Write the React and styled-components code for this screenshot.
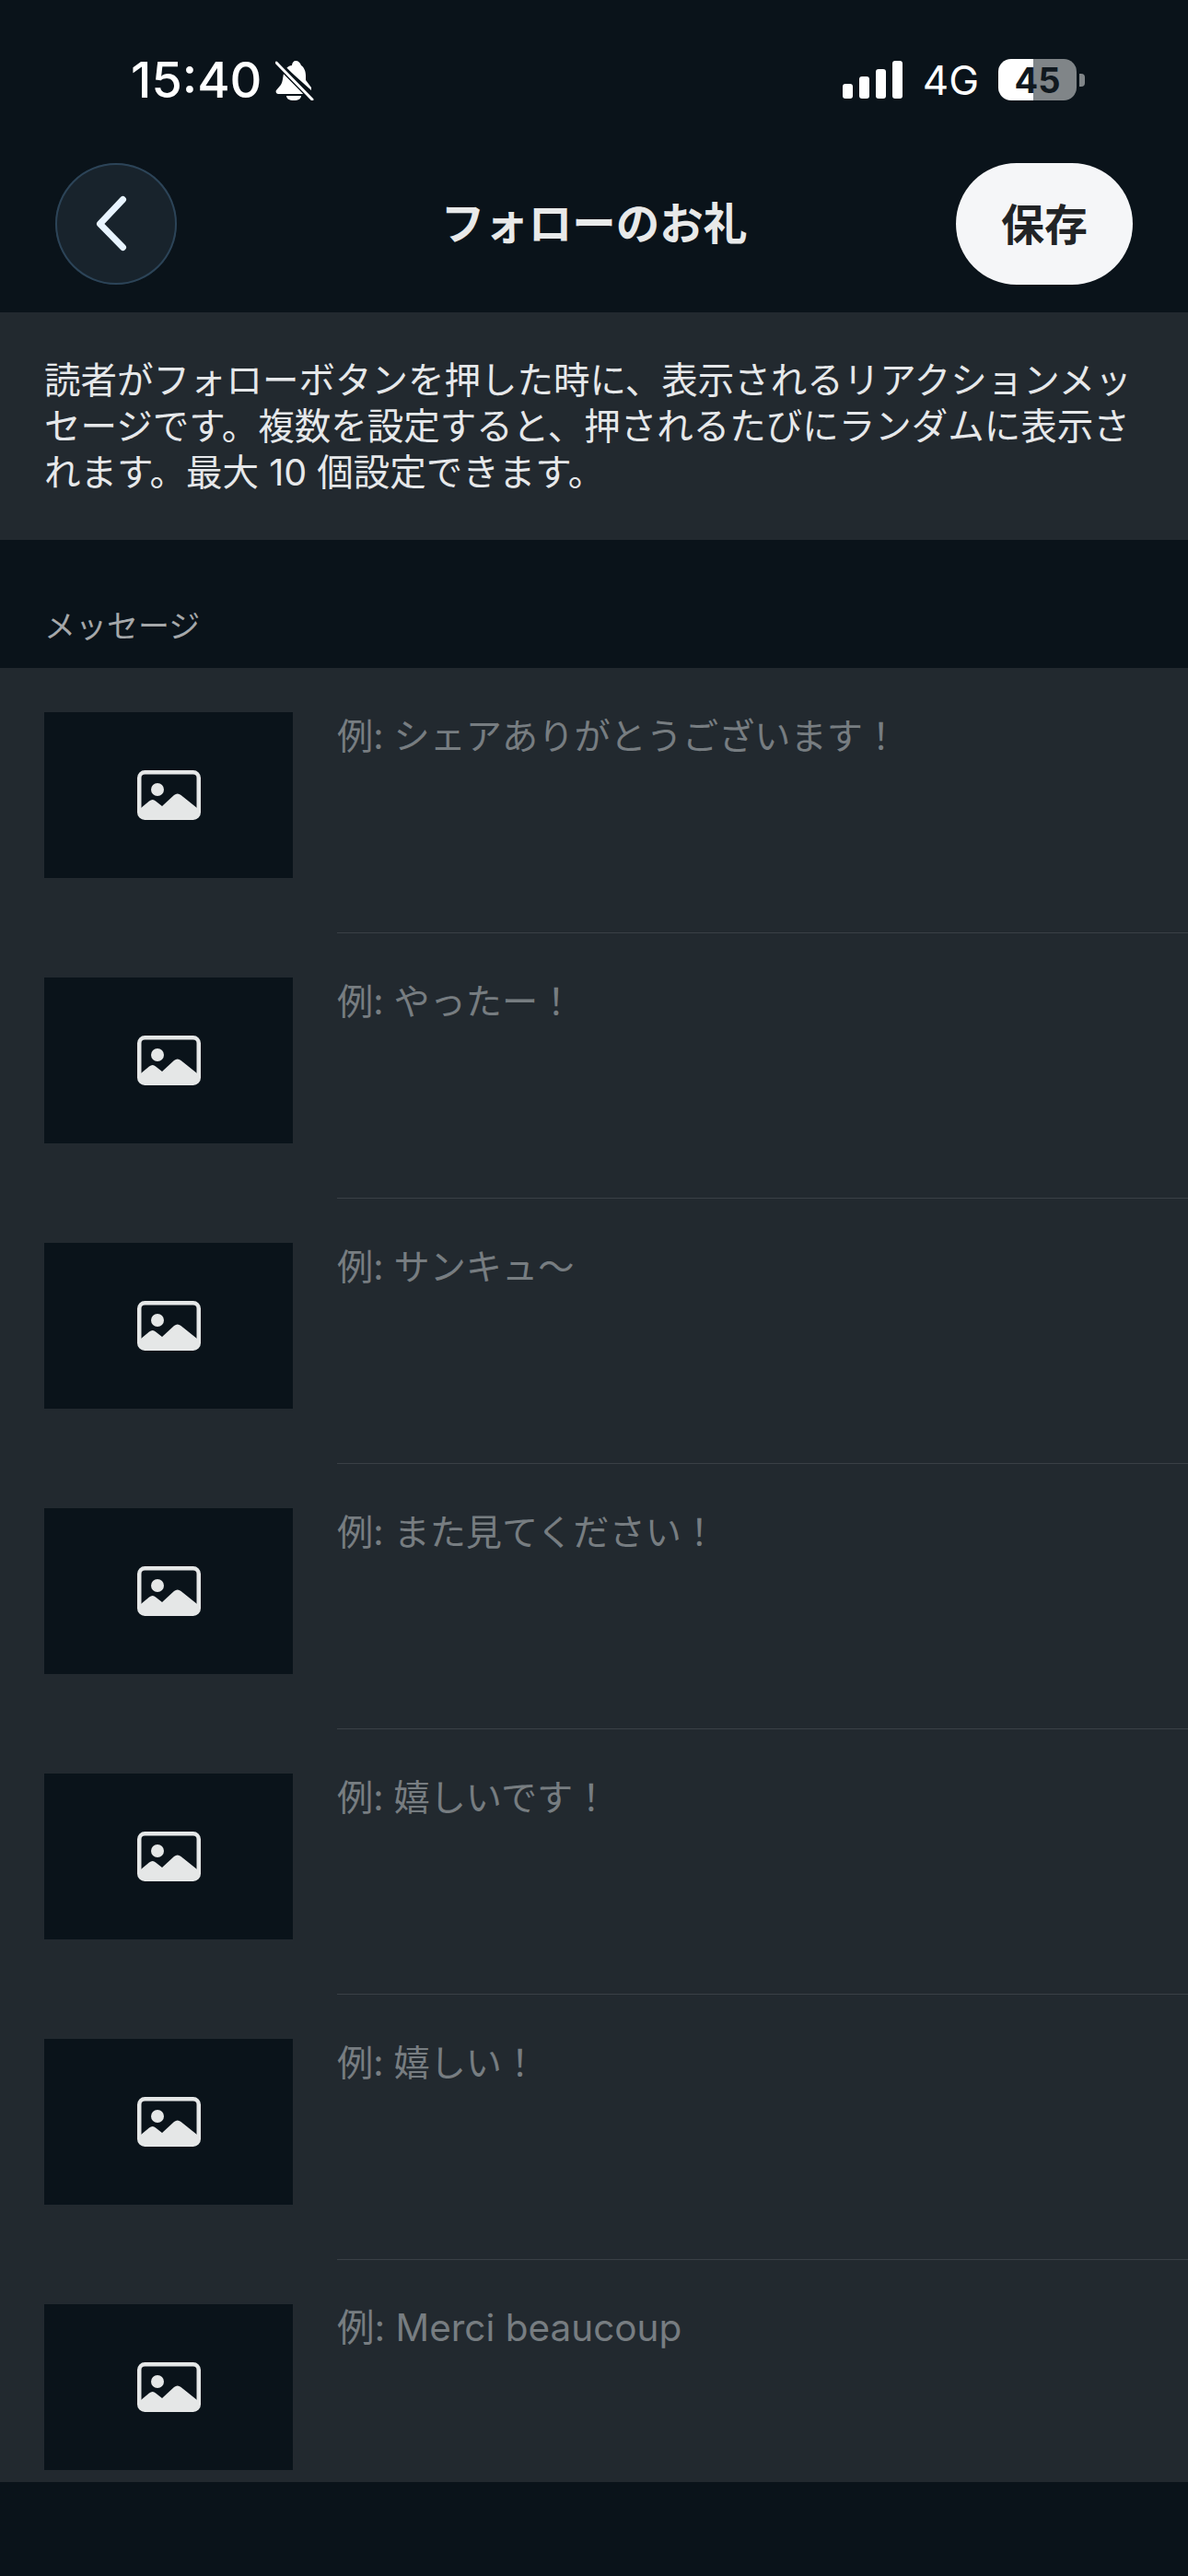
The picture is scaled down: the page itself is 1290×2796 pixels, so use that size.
import React from 'react';
import styled, { createGlobalStyle } from 'styled-components';

const GlobalStyle = createGlobalStyle`
  html, body {
    margin: 0;
    padding: 0;
    background: #0a131a;
  }
  body {
    font-family: Inter, "Noto Sans CJK JP", sans-serif;
  }
`;

const Page = styled.div`
  width: 1290px;
  height: 2796px;
  overflow: hidden;
  background: #0a131a;
`;

const StatusBar = styled.div`
  height: 177px;
  box-sizing: border-box;
  padding: 0 112px 4px 142px;
  display: flex;
  align-items: center;
  justify-content: space-between;
  color: #fff;
`;

const TimeGroup = styled.div`
  display: flex;
  align-items: center;
  gap: 15px;
`;

const Time = styled.span`
  font-size: 54px;
  font-weight: 500;
  line-height: 1;
`;

const StatusRight = styled.div`
  display: flex;
  align-items: center;
`;

const Signal = styled.div`
  display: flex;
  align-items: flex-end;
  gap: 7px;
  height: 41px;
  margin-right: 22px;
`;

const SignalBar = styled.div`
  width: 11px;
  height: ${(p) => p.$height}px;
  border-radius: 3px;
  background: #fff;
`;

const Network = styled.span`
  font-size: 44px;
  font-weight: 400;
  line-height: 1;
  margin-right: 21px;
`;

const Battery = styled.div`
  width: 85px;
  height: 45px;
  border-radius: 14px;
  display: flex;
  align-items: center;
  justify-content: center;
  color: #10181e;
  font-size: 38px;
  font-weight: 700;
  background: linear-gradient(
    to right,
    #fff ${(p) => p.$level}%,
    #808588 ${(p) => p.$level}%
  );
`;

const BatteryNub = styled.div`
  width: 6px;
  height: 14px;
  margin-left: 3px;
  border-radius: 0 4px 4px 0;
  background: #808588;
`;

const NavBar = styled.div`
  display: grid;
  grid-template-columns: 1fr auto 1fr;
  align-items: center;
  padding: 0 60px 30px;
`;

const BackButton = styled.div`
  justify-self: start;
  width: 132px;
  height: 132px;
  border-radius: 50%;
  background: #18232c;
  box-shadow: inset 0 0 0 2px #2c4458;
`;

const Title = styled.div`
  font-size: 47.5px;
  font-weight: 700;
  line-height: 60px;
  color: #e8e9e9;
`;

const SaveButton = styled.div`
  justify-self: end;
  width: 192px;
  height: 132px;
  box-sizing: border-box;
  padding-bottom: 5px;
  border-radius: 66px;
  background: #f5f6f8;
  color: #222426;
  font-size: 47px;
  font-weight: 700;
  display: flex;
  align-items: center;
  justify-content: center;
`;

const Info = styled.div`
  height: 247px;
  box-sizing: border-box;
  padding: 49px 48px 0;
  background: #22292f;
  color: #e6e8ea;
  font-size: 39.5px;
  font-weight: 400;
  line-height: 50px;
`;

const SectionLabel = styled.div`
  height: 139px;
  box-sizing: border-box;
  padding: 72px 48px 0;
  color: #a5a8aa;
  font-size: 34px;
  line-height: 44px;
`;

const List = styled.div`
  background: #22292f;
`;

const Row = styled.div`
  display: flex;
  gap: 48px;
  padding-left: 48px;
`;

const Thumb = styled.div`
  flex: none;
  width: 270px;
  height: 180px;
  margin: 48px 0 ${(p) => (p.$last ? 13 : 60)}px;
  background: #0a131a;
  display: flex;
  align-items: center;
  justify-content: center;
`;

const TextCell = styled.div`
  flex: 1;
  padding-top: 49px;
  border-bottom: ${(p) => (p.$last ? 'none' : '1px solid #3a4046')};
`;

const Placeholder = styled.div`
  color: #777d81;
  font-size: ${(p) => (p.$latin ? 40.5 : 39.2)}px;
  line-height: 50px;
`;

const BellOffIcon = () => (
  <svg width="42" height="44" viewBox="0 0 42 44" aria-hidden="true">
    <path
      d="M22 1c3 0 5 2 6 5 3 2 5 6 5 11v5l6 8v3L12 9c2-2 4-3 6-3 0-3 2-5 4-5Z"
      fill="#fff"
    />
    <path d="M9 15 31 37H3c-2 0-3-3-2-4l5-6c2-3 2-8 3-12Z" fill="#fff" />
    <path d="M12 39h16c0 3-3 5-8 5s-8-2-8-5Z" fill="#fff" />
    <path d="M2 3 41 43" stroke="#0a131a" strokeWidth="7" />
    <path d="M1 3 40 43" stroke="#fff" strokeWidth="3" strokeLinecap="round" />
  </svg>
);

const ChevronIcon = () => (
  <svg width="132" height="132" viewBox="0 0 132 132" aria-hidden="true">
    <path
      d="M73.5 39.5 48.5 66l25 25.5"
      fill="none"
      stroke="#e8f4ff"
      strokeWidth="7"
      strokeLinecap="round"
      strokeLinejoin="round"
    />
  </svg>
);

const ImageIcon = () => (
  <svg width="69" height="54" viewBox="0 0 69 54" aria-hidden="true">
    <rect x="2.25" y="2.25" width="64.5" height="49.5" rx="6" fill="none" stroke="#e5e7e7" strokeWidth="4.5" />
    <circle cx="22" cy="21" r="7" fill="#e5e7e7" />
    <path
      d="M4 41 13 33.5c2.5-2 5-2 7 0L27 39 40 27c2.5-2 5-2 7.5 0L65 41v7c0 2-2 4-4 4H8c-2 0-4-2-4-4Z"
      fill="#e5e7e7"
    />
  </svg>
);

const examples = [
  { text: '例: シェアありがとうございます！' },
  { text: '例: やったー！' },
  { text: '例: サンキュ〜' },
  { text: '例: また見てください！' },
  { text: '例: 嬉しいです！' },
  { text: '例: 嬉しい！' },
  { text: '例: Merci beaucoup', latin: true },
];

export default function App() {
  return (
    <Page>
      <GlobalStyle />
      <StatusBar>
        <TimeGroup>
          <Time>15:40</Time>
          <BellOffIcon />
        </TimeGroup>
        <StatusRight>
          <Signal>
            {[16, 24, 32, 41].map((h) => (
              <SignalBar $height={h} key={h} />
            ))}
          </Signal>
          <Network>4G</Network>
          <Battery $level={45}>45</Battery>
          <BatteryNub />
        </StatusRight>
      </StatusBar>
      <NavBar>
        <BackButton>
          <ChevronIcon />
        </BackButton>
        <Title>フォローのお礼</Title>
        <SaveButton>保存</SaveButton>
      </NavBar>
      <Info>
        読者がフォローボタンを押した時に、表示されるリアクションメッセージです。複数を設定すると、押されるたびにランダムに表示されます。最大 10 個設定できます。
      </Info>
      <SectionLabel>メッセージ</SectionLabel>
      <List>
        {examples.map(({ text, latin }, i) => {
          const last = i === examples.length - 1;
          return (
            <Row key={text}>
              <Thumb $last={last}>
                <ImageIcon />
              </Thumb>
              <TextCell $last={last}>
                <Placeholder $latin={latin}>{text}</Placeholder>
              </TextCell>
            </Row>
          );
        })}
      </List>
    </Page>
  );
}
